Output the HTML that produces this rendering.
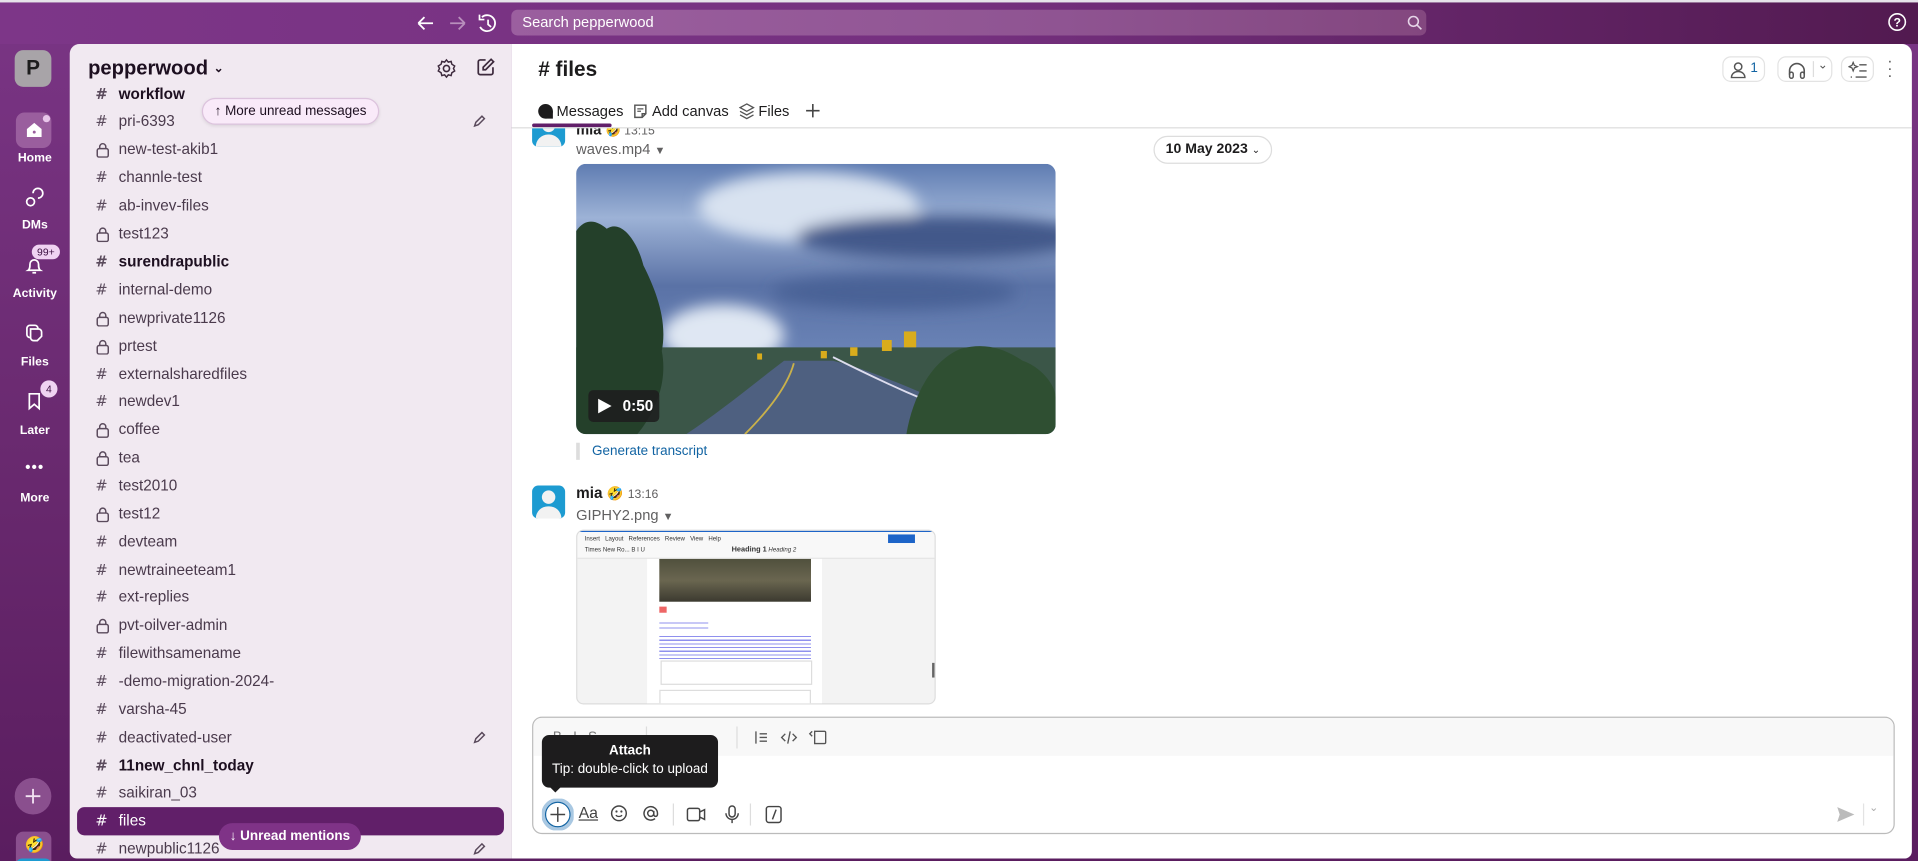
<!DOCTYPE html>
<html><head><meta charset="utf-8">
<style>
*{box-sizing:border-box;margin:0;padding:0}
html,body{width:1918px;height:861px;overflow:hidden;background:#5a1e5c}
body{font-family:"Liberation Sans","Noto Sans CJK JP",sans-serif}
#w{position:absolute;left:0;top:0;width:1568px;height:704px;transform:scale(1.22321,1.22301);transform-origin:0 0;background:linear-gradient(180deg,#7a3585 0%,#6a2a70 50%,#5a1d5f 100%);overflow:hidden}
.abs{position:absolute}
.top{left:0;top:0;width:1568px;height:36px;background:linear-gradient(90deg,#7d3688 0%,#75307f 50%,#521a50 100%)}
.strip{left:0;top:0;width:1568px;height:2px;background:#e6e3ea}
.search{left:418px;top:8px;width:748px;height:21px;border-radius:5px;background:linear-gradient(90deg,#9b5f9f,#8f5492 60%,#83477f);color:#fff;font-size:12px;line-height:21px;padding-left:9px}
.rail .lbl{position:absolute;width:57px;text-align:center;color:#fff;font-size:10px;font-weight:bold}
.side{left:57px;top:36px;width:361px;height:666px;background:#f1e9f1;border-top-left-radius:8px;border-bottom-left-radius:6px}
.ch{position:absolute;left:21px;font-size:12.5px;color:#4a3a4c;height:20px;line-height:20px}
.ch .ic{position:absolute;left:0;top:0;width:14px;color:#5a4a5c;font-family:"DejaVu Sans",sans-serif;font-size:12px}
.ch .ic svg{margin-top:4px}
.ch span.t{position:absolute;left:19px;white-space:nowrap}
.ch.b{color:#1d0f20;font-weight:bold}
.main{left:418px;top:36px;width:1145px;height:666px;background:#fff;border-top-right-radius:8px;border-bottom-right-radius:6px}
.hb{position:absolute;border:1px solid #e3e3e3;border-radius:7px;height:21px}
svg{display:block}
</style></head><body>
<svg width="0" height="0" style="position:absolute"><defs><g id="lk"><rect x="1.5" y="5.5" width="9" height="7" rx="1.5" stroke="#5a4a5c" stroke-width="1.2" fill="none"/><path d="M3.5 5.5V4a2.5 2.5 0 0 1 5 0v1.5" stroke="#5a4a5c" stroke-width="1.2" fill="none"/></g></defs></svg>
<div id="w">
<div class="abs top"></div>
<div class="abs strip"></div>
<svg class="abs" style="left:340px;top:10px" width="80" height="18" viewBox="0 0 80 18">
<path d="M2 9h12M2 9l5-5M2 9l5 5" stroke="#fff" stroke-width="1.5" fill="none"/>
<path d="M40 9h-12M40 9l-5-5M40 9l-5 5" stroke="#b98fbd" stroke-width="1.5" fill="none"/>
<path d="M54 4a6.5 6.5 0 1 1 -1.5 8" stroke="#fff" stroke-width="1.5" fill="none"/><path d="M52 2v4h4" stroke="#fff" stroke-width="1.4" fill="none"/><path d="M59 6v4l2.5 2" stroke="#fff" stroke-width="1.4" fill="none"/>
</svg>
<div class="abs search">Search pepperwood</div>
<svg class="abs" style="left:1150px;top:12px" width="13" height="13"><circle cx="5.5" cy="5.5" r="4" stroke="#e6d5e8" stroke-width="1.3" fill="none"/><path d="M8.5 8.5l3.5 3.5" stroke="#e6d5e8" stroke-width="1.3"/></svg>
<svg class="abs" style="left:1543px;top:10px" width="16" height="16"><circle cx="8" cy="8" r="6.7" stroke="#fff" stroke-width="1.3" fill="none"/><text x="8" y="11.5" text-anchor="middle" font-size="10" font-weight="bold" fill="#fff" font-family="Liberation Sans">?</text></svg>

<div class="rail">
<div class="abs" style="left:12px;top:41px;width:30px;height:30px;border-radius:7px;background:#a8a4a8;color:#1d1d1d;font-size:17px;font-weight:bold;text-align:center;line-height:30px">P</div>
<div class="abs" style="left:13px;top:92px;width:29px;height:29px;border-radius:7px;background:#9a5e9e"></div>
<svg class="abs" style="left:19px;top:97px" width="18" height="18"><path d="M3 8.5L9 3.5l6 5V15H3z" fill="#fff"/><circle cx="9" cy="11" r="1.2" fill="#9a5e9e"/></svg>
<div class="abs" style="left:35px;top:94px;width:6px;height:6px;border-radius:3px;background:#e8c6ea"></div>
<div class="lbl" style="top:124px">Home</div>
<svg class="abs" style="left:19px;top:153px" width="18" height="18"><path d="M8 5a4 4 0 1 1 4 4" stroke="#fff" stroke-width="1.4" fill="none"/><circle cx="6" cy="12" r="3.2" stroke="#fff" stroke-width="1.4" fill="none"/></svg>
<div class="lbl" style="top:179px">DMs</div>
<svg class="abs" style="left:19px;top:208px" width="18" height="18"><path d="M4 13c1.5-1 1.5-3 1.5-5a3.5 3.5 0 0 1 7 0c0 2 0 4 1.5 5z M7.5 15h3" stroke="#fff" stroke-width="1.4" fill="none"/></svg>
<div class="abs" style="left:26px;top:200px;width:23px;height:12px;border-radius:6px;background:#f0d3f2;color:#3b1040;font-size:8.5px;text-align:center;line-height:12px">99+</div>
<div class="lbl" style="top:235px">Activity</div>
<svg class="abs" style="left:19px;top:263px" width="18" height="18"><rect x="3" y="3" width="9" height="10" rx="2.5" stroke="#fff" stroke-width="1.4" fill="none"/><path d="M6 6h6.5a2.5 2.5 0 0 1 2.5 2.5V12l-3.5 3.5H8.5A2.5 2.5 0 0 1 6 13z" stroke="#fff" stroke-width="1.4" fill="#6a2a70"/></svg>
<div class="lbl" style="top:291px">Files</div>
<svg class="abs" style="left:19px;top:319px" width="18" height="18"><path d="M5 3h8v12l-4-3.5L5 15z" stroke="#fff" stroke-width="1.4" fill="none"/></svg>
<div class="abs" style="left:33px;top:311px;width:14px;height:14px;border-radius:7px;background:#f0d3f2;color:#3b1040;font-size:8.5px;text-align:center;line-height:14px">4</div>
<div class="lbl" style="top:347px">Later</div>
<div class="lbl" style="top:375px;font-size:12px;letter-spacing:1px">•••</div>
<div class="lbl" style="top:402px">More</div>
<div class="abs" style="left:12px;top:636px;width:30px;height:30px;border-radius:15px;background:#8a4f8e"></div>
<svg class="abs" style="left:19px;top:643px" width="16" height="16"><path d="M8 2v12M2 8h12" stroke="#f2e3f2" stroke-width="1.5"/></svg>
<div class="abs" style="left:13px;top:680px;width:29px;height:30px;border-radius:6px;background:#8a4f8e;overflow:hidden"><div style="position:absolute;left:0;top:22px;width:29px;height:10px;background:#1d9bd1;border-radius:5px 5px 0 0"></div><div style="position:absolute;left:7px;top:3px;font-size:13px">🤣</div></div>
</div>

<div class="abs side">
<div class="abs" style="left:15px;top:11px;font-size:16.5px;font-weight:bold;color:#1d0f20">pepperwood <span style="font-size:10px;position:relative;top:-2px">⌄</span></div>
<svg class="abs" style="left:299px;top:11px" width="18" height="18" viewBox="0 0 18 18"><circle cx="9" cy="9" r="2.5" stroke="#3d2a3d" stroke-width="1.3" fill="none"/><path d="M9 2l1.5 1.8 2.3-.6.6 2.3L15.7 7l-1 2 1 2-2.3 1.5-.6 2.3-2.3-.6L9 16l-1.5-1.8-2.3.6-.6-2.3L2.3 11l1-2-1-2 2.3-1.5.6-2.3 2.3.6z" stroke="#3d2a3d" stroke-width="1.2" fill="none"/></svg>
<svg class="abs" style="left:331px;top:10px" width="18" height="18"><path d="M9 3H4.5A1.5 1.5 0 0 0 3 4.5v9A1.5 1.5 0 0 0 4.5 15h9a1.5 1.5 0 0 0 1.5-1.5V9" stroke="#3d2a3d" stroke-width="1.4" fill="none"/><path d="M13.5 2.5l2 2L9 11H7V9z" stroke="#3d2a3d" stroke-width="1.4" fill="none"/></svg>
</div>
<div class="abs" style="left:57px;top:66px;width:361px;height:636px;overflow:hidden">
<div class="ch b" style="top:1px"><span class="ic">#</span><span class="t">workflow</span></div>
<div class="ch" style="top:23px"><span class="ic">#</span><span class="t">pri-6393</span></div>
<div class="ch" style="top:46px"><span class="ic"><svg width="12" height="13"><use href="#lk"/></svg></span><span class="t">new-test-akib1</span></div>
<div class="ch" style="top:69px"><span class="ic">#</span><span class="t">channle-test</span></div>
<div class="ch" style="top:92px"><span class="ic">#</span><span class="t">ab-invev-files</span></div>
<div class="ch" style="top:115px"><span class="ic"><svg width="12" height="13"><use href="#lk"/></svg></span><span class="t">test123</span></div>
<div class="ch b" style="top:138px"><span class="ic">#</span><span class="t">surendrapublic</span></div>
<div class="ch" style="top:161px"><span class="ic">#</span><span class="t">internal-demo</span></div>
<div class="ch" style="top:184px"><span class="ic"><svg width="12" height="13"><use href="#lk"/></svg></span><span class="t">newprivate1126</span></div>
<div class="ch" style="top:207px"><span class="ic"><svg width="12" height="13"><use href="#lk"/></svg></span><span class="t">prtest</span></div>
<div class="ch" style="top:230px"><span class="ic">#</span><span class="t">externalsharedfiles</span></div>
<div class="ch" style="top:252px"><span class="ic">#</span><span class="t">newdev1</span></div>
<div class="ch" style="top:275px"><span class="ic"><svg width="12" height="13"><use href="#lk"/></svg></span><span class="t">coffee</span></div>
<div class="ch" style="top:298px"><span class="ic"><svg width="12" height="13"><use href="#lk"/></svg></span><span class="t">tea</span></div>
<div class="ch" style="top:321px"><span class="ic">#</span><span class="t">test2010</span></div>
<div class="ch" style="top:344px"><span class="ic"><svg width="12" height="13"><use href="#lk"/></svg></span><span class="t">test12</span></div>
<div class="ch" style="top:367px"><span class="ic">#</span><span class="t">devteam</span></div>
<div class="ch" style="top:390px"><span class="ic">#</span><span class="t">newtraineeteam1</span></div>
<div class="ch" style="top:412px"><span class="ic">#</span><span class="t">ext-replies</span></div>
<div class="ch" style="top:435px"><span class="ic"><svg width="12" height="13"><use href="#lk"/></svg></span><span class="t">pvt-oilver-admin</span></div>
<div class="ch" style="top:458px"><span class="ic">#</span><span class="t">filewithsamename</span></div>
<div class="ch" style="top:481px"><span class="ic">#</span><span class="t">-demo-migration-2024-</span></div>
<div class="ch" style="top:504px"><span class="ic">#</span><span class="t">varsha-45</span></div>
<div class="ch" style="top:527px"><span class="ic">#</span><span class="t">deactivated-user</span></div>
<div class="ch b" style="top:550px"><span class="ic">#</span><span class="t">11new_chnl_today</span></div>
<div class="ch" style="top:572px"><span class="ic">#</span><span class="t">saikiran_03</span></div>
<div style="position:absolute;left:6px;top:594px;width:349px;height:23px;border-radius:6px;background:#611f69"></div>
<div class="ch" style="top:595px;color:#fff"><span class="ic" style="color:#fff">#</span><span class="t">files</span></div>
<div class="ch" style="top:618px"><span class="ic">#</span><span class="t">newpublic1126</span></div>
</div>
<svg class="abs" style="left:386px;top:93px" width="12" height="12"><path d="M2 10l1-3 5-5 2 2-5 5z" stroke="#5a4a5c" stroke-width="1.2" fill="none"/></svg>
<svg class="abs" style="left:386px;top:597px" width="12" height="12"><path d="M2 10l1-3 5-5 2 2-5 5z" stroke="#5a4a5c" stroke-width="1.2" fill="none"/></svg>
<svg class="abs" style="left:386px;top:688px" width="12" height="12"><path d="M2 10l1-3 5-5 2 2-5 5z" stroke="#5a4a5c" stroke-width="1.2" fill="none"/></svg>
<div class="abs" style="left:165px;top:80px;width:145px;height:22px;border-radius:11px;background:#f9eaf9;border:1px solid #dcc3dd;font-size:11px;color:#1d0f20;line-height:20px;text-align:center;box-shadow:0 1px 3px rgba(0,0,0,.1)">↑ More unread messages</div>
<div class="abs" style="left:179px;top:673px;width:116px;height:22px;border-radius:11px;background:#7f3387;font-size:11px;color:#fff;font-weight:bold;line-height:22px;text-align:center">↓ Unread mentions</div>

<div class="abs main">
<div class="abs" style="left:22px;top:11px;font-size:17px;font-weight:bold;color:#1d1c1d"># files</div>
<div class="hb" style="left:990px;top:10px;width:35px"><svg style="position:absolute;left:5px;top:3px" width="14" height="14"><circle cx="7" cy="4.5" r="3" stroke="#555" stroke-width="1.2" fill="none"/><path d="M1.5 13.5c0-3 2.5-5 5.5-5s5.5 2 5.5 5z" stroke="#555" stroke-width="1.2" fill="none"/></svg><span style="position:absolute;left:22px;top:3px;font-size:11px;color:#1264a3">1</span></div>
<div class="hb" style="left:1035px;top:10px;width:45px"><svg style="position:absolute;left:7px;top:3px" width="16" height="15"><path d="M2 11V8a6 6 0 0 1 12 0v3" stroke="#555" stroke-width="1.3" fill="none"/><rect x="2" y="9" width="3" height="5" rx="1.5" stroke="#555" stroke-width="1.2" fill="none"/><rect x="11" y="9" width="3" height="5" rx="1.5" stroke="#555" stroke-width="1.2" fill="none"/></svg><div style="position:absolute;left:28px;top:3px;width:1px;height:13px;background:#ddd"></div><span style="position:absolute;left:32px;top:1px;font-size:10px;color:#555">⌄</span></div>
<div class="hb" style="left:1087px;top:10px;width:27px"><svg style="position:absolute;left:5px;top:3px" width="16" height="15"><path d="M4 1l1 2.5 2.5 1-2.5 1L4 8 3 5.5.5 4.5 3 3.5z" stroke="#555" stroke-width="1" fill="none"/><path d="M9 3h6M9 8h6M6 13h9M2 13h1" stroke="#555" stroke-width="1.2"/></svg></div>
<div class="abs" style="left:1124px;top:11px;font-size:13px;color:#555;line-height:6px;width:6px;text-align:center">·<br>·<br>·</div>
<svg class="abs" style="left:21px;top:48px" width="14" height="14"><circle cx="7" cy="7" r="6" fill="#1d1c1d"/><path d="M7 7h6v6H7z" fill="#1d1c1d"/></svg>
<div class="abs" style="left:37px;top:48px;font-size:12px;color:#1d1c1d">Messages</div>
<div class="abs" style="left:17px;top:65px;width:65px;height:3px;background:#611f69;border-radius:2px"></div>
<svg class="abs" style="left:99px;top:48px" width="13" height="14"><path d="M2 2h9v7l-3 3H2z M8 12V9h3" stroke="#555" stroke-width="1.2" fill="none"/><path d="M4 5h5M4 7h3" stroke="#555" stroke-width="1"/></svg>
<div class="abs" style="left:115px;top:48px;font-size:12px;color:#1d1c1d">Add canvas</div>
<svg class="abs" style="left:186px;top:48px" width="13" height="14"><path d="M6.5 1l5.5 3-5.5 3L1 4z M1 7l5.5 3 5.5-3 M1 10l5.5 3 5.5-3" stroke="#555" stroke-width="1.1" fill="none"/></svg>
<div class="abs" style="left:202px;top:48px;font-size:12px;color:#1d1c1d">Files</div>
<svg class="abs" style="left:240px;top:48px" width="13" height="13"><path d="M6.5 1v11M1 6.5h11" stroke="#444" stroke-width="1.3"/></svg>
<div class="abs" style="left:0;top:68px;width:1145px;height:1px;background:#ddd"></div>
<div class="abs" style="left:0;top:69px;width:1145px;height:480px;overflow:hidden">
 <div class="abs" style="left:17px;top:-12px;width:27px;height:27px;border-radius:5px;background:#1d9bd1;overflow:hidden"><div style="position:absolute;left:8px;top:4px;width:11px;height:11px;border-radius:6px;background:#f2f2f2"></div><div style="position:absolute;left:3px;top:17px;width:21px;height:14px;border-radius:10px 10px 0 0;background:#f2f2f2"></div></div>
 <div class="abs" style="left:53px;top:-6px;font-size:12px;font-weight:bold;color:#1d1c1d">mia <span style="font-weight:normal;color:#616061;font-size:10px">🤣 13:15</span></div>
 <div class="abs" style="left:53px;top:10px;font-size:12px;color:#616061">waves.mp4 <span style="font-size:9px">▼</span></div>
 <div class="abs" style="left:525px;top:6px;width:97px;height:23px;border:1px solid #ddd;border-radius:12px;font-size:11.5px;font-weight:bold;color:#1d1c1d;text-align:center;line-height:21px;background:#fff">10 May 2023 <span style="font-size:8px;font-weight:normal">⌄</span></div>
 <svg class="abs" style="left:53px;top:29px" width="392" height="221" viewBox="0 0 392 221">
  <defs><clipPath id="c"><rect width="392" height="221" rx="8"/></clipPath>
  <linearGradient id="s" x1="0" y1="0" x2="0" y2="1"><stop offset="0" stop-color="#5f7cb2"/><stop offset=".2" stop-color="#9db2d6"/><stop offset=".45" stop-color="#5a72a6"/><stop offset=".7" stop-color="#6a83b6"/></linearGradient>
  <filter id="bl"><feGaussianBlur stdDeviation="6"/></filter></defs>
  <g clip-path="url(#c)">
  <rect width="392" height="221" fill="url(#s)"/>
  <g filter="url(#bl)"><ellipse cx="190" cy="35" rx="90" ry="28" fill="#d8e2f0"/><ellipse cx="300" cy="60" rx="120" ry="18" fill="#43598a"/><ellipse cx="260" cy="105" rx="100" ry="14" fill="#4a6296"/><ellipse cx="120" cy="140" rx="50" ry="25" fill="#dfe7f3"/></g>
  <path d="M0 150h392v71H0z" fill="#3b5648"/>
  <path d="M90 221c30-20 60-45 80-60h40c40 10 80 30 150 60z" fill="#4e6080"/>
  <path d="M138 221c20-20 35-40 40-58" stroke="#c9b14a" stroke-width="1.5" fill="none"/>
  <path d="M210 158c30 15 80 40 150 63" stroke="#dde" stroke-width="1.5" fill="none"/>
  <path d="M0 55c8-12 18-8 25-2 12-8 25 10 30 30 10 20 20 45 15 70 5 25-5 50-20 68H0z" fill="#24402a"/>
  <path d="M270 221c5-30 20-60 45-70 20-5 35 0 50 10 15 5 27 20 27 30v30z" fill="#2f4f32"/>
  <g fill="#d9ac1c"><rect x="268" y="137" width="10" height="13"/><rect x="250" y="144" width="8" height="9"/><rect x="224" y="150" width="6" height="7"/><rect x="200" y="153" width="5" height="6"/><rect x="148" y="155" width="4" height="5"/></g>
  </g>
 </svg>
 <div class="abs" style="left:63px;top:214px;width:58px;height:26px;border-radius:4px;background:rgba(29,28,29,.85);color:#fff;font-size:12.5px;font-weight:bold;line-height:26px;padding-left:28px">0:50</div>
 <svg class="abs" style="left:69px;top:220px" width="14" height="14"><path d="M2 1l11 6-11 6z" fill="#fff"/></svg>
 <div class="abs" style="left:53px;top:257px;width:3px;height:14px;background:#ddd"></div>
 <div class="abs" style="left:66px;top:258px;font-size:11px;color:#1264a3">Generate transcript</div>
 <div class="abs" style="left:17px;top:292px;width:27px;height:27px;border-radius:5px;background:#1d9bd1;overflow:hidden"><div style="position:absolute;left:8px;top:4px;width:11px;height:11px;border-radius:6px;background:#f2f2f2"></div><div style="position:absolute;left:3px;top:17px;width:21px;height:14px;border-radius:10px 10px 0 0;background:#f2f2f2"></div></div>
 <div class="abs" style="left:53px;top:291px;font-size:12.5px;font-weight:bold;color:#1d1c1d">mia <span style="font-weight:normal;font-size:11px">🤣</span> <span style="font-weight:normal;color:#616061;font-size:10px">13:16</span></div>
 <div class="abs" style="left:53px;top:309px;font-size:12px;color:#616061">GIPHY2.png <span style="font-size:9px">▼</span></div>
 <div class="abs" style="left:53px;top:328px;width:294px;height:143px;border:1px solid #ddd;border-radius:6px;overflow:hidden;background:#f3f3f3">
  <div style="position:absolute;left:0;top:0;width:294px;height:1px;background:#1d64c8"></div>
  <div style="position:absolute;left:0;top:1px;width:294px;height:22px;background:#f8f8f8;border-bottom:1px solid #e5e5e5;font-size:5px;color:#333;padding:2px 6px;line-height:9px">Insert &nbsp; Layout &nbsp; References &nbsp; Review &nbsp; View &nbsp; Help<br>Times New Ro... B I U &nbsp; &nbsp; &nbsp; &nbsp; &nbsp; &nbsp; &nbsp; &nbsp; &nbsp; &nbsp; &nbsp; &nbsp; &nbsp; &nbsp; &nbsp; &nbsp; &nbsp; &nbsp; &nbsp; &nbsp; &nbsp; &nbsp; &nbsp; &nbsp; &nbsp; <b style="font-size:6px">Heading 1</b> <i>Heading 2</i></div>
  <div style="position:absolute;left:254px;top:3px;width:22px;height:7px;background:#1d64c8"></div>
  <div style="position:absolute;left:57px;top:23px;width:143px;height:120px;background:#fff"></div>
  <div style="position:absolute;left:67px;top:23px;width:124px;height:35px;background:linear-gradient(180deg,#50503d,#6a6650 50%,#3c3a30)"></div>
  <div style="position:absolute;left:67px;top:62px;width:6px;height:5px;background:#e66"></div>
  <div style="position:absolute;left:67px;top:75px;width:40px;height:8px;background:repeating-linear-gradient(180deg,#8f90ee 0 1px,transparent 1px 4px)"></div>
  <div style="position:absolute;left:67px;top:86px;width:124px;height:20px;background:repeating-linear-gradient(180deg,#8f90ee 0 1px,transparent 1px 3px)"></div>
  <div style="position:absolute;left:68px;top:106px;width:124px;height:20px;background:#fff;border:1px solid #ddd"></div>
  <div style="position:absolute;left:67px;top:130px;width:124px;height:13px;background:#fff;border:1px solid #ddd"></div>
  <div style="position:absolute;left:290px;top:108px;width:2px;height:12px;background:#666"></div>
 </div>
</div>
<div class="abs" style="left:17px;top:550px;width:1114px;height:96px;border:1px solid #bbb;border-radius:8px;background:#fff;overflow:hidden">
 <div style="position:absolute;left:0;top:0;width:1114px;height:31px;background:#f8f8f8"></div>
 <div style="position:absolute;left:16px;top:10px;width:150px;font-size:11px;color:#777">B &nbsp; I &nbsp; S</div>
 <div style="position:absolute;left:92px;top:7px;width:1px;height:18px;background:#ddd"></div>
 <div style="position:absolute;left:166px;top:7px;width:1px;height:18px;background:#ddd"></div>
 <svg style="position:absolute;left:180px;top:9px" width="80" height="14"><path d="M2 2v10M5 4h6M5 7h6M5 10h6" stroke="#555" stroke-width="1.1"/><path d="M26 4l-3 3 3 3M32 4l3 3-3 3M30 2l-2 10" stroke="#555" stroke-width="1.1" fill="none"/><path d="M50 2h8a1 1 0 0 1 1 1v8a1 1 0 0 1-1 1h-8z M48 2l-2 2 2 2" stroke="#555" stroke-width="1.1" fill="none"/></svg>
 <svg style="position:absolute;left:7px;top:66px" width="26" height="26"><circle cx="13" cy="13" r="12" fill="none" stroke="#a9c8e2" stroke-width="3"/><circle cx="13" cy="13" r="10" fill="#fff" stroke="#1264a3" stroke-width="1"/><path d="M13 7v12M7 13h12" stroke="#444" stroke-width="1.2"/></svg>
 <div style="position:absolute;left:37px;top:70px;font-size:13px;color:#444;text-decoration:underline">Aa</div>
 <svg style="position:absolute;left:63px;top:71px" width="100" height="16"><circle cx="7" cy="7" r="6" stroke="#444" stroke-width="1.2" fill="none"/><circle cx="5" cy="5.5" r=".9" fill="#444"/><circle cx="9" cy="5.5" r=".9" fill="#444"/><path d="M4.5 8.5a3 2.5 0 0 0 5 0" stroke="#444" stroke-width="1.1" fill="none"/><circle cx="33" cy="7" r="2.5" stroke="#444" stroke-width="1.2" fill="none"/><path d="M35.5 5v3a1.5 1.5 0 0 0 3 0V7a5.5 5.5 0 1 0-2 4.3" stroke="#444" stroke-width="1.2" fill="none"/></svg>
 <div style="position:absolute;left:114px;top:70px;width:1px;height:18px;background:#ddd"></div>
 <svg style="position:absolute;left:125px;top:71px" width="90" height="16"><rect x="1" y="3" width="10" height="10" rx="1.5" stroke="#444" stroke-width="1.2" fill="none"/><path d="M11 6l4-2v8l-4-2" stroke="#444" stroke-width="1.2" fill="none"/><rect x="35" y="1" width="5" height="9" rx="2.5" stroke="#444" stroke-width="1.2" fill="none"/><path d="M32.5 7a5 5 0 0 0 10 0M37.5 12v3" stroke="#444" stroke-width="1.2" fill="none"/></svg>
 <div style="position:absolute;left:177px;top:70px;width:1px;height:18px;background:#ddd"></div>
 <svg style="position:absolute;left:189px;top:71px" width="16" height="16"><rect x="1.5" y="1.5" width="12" height="13" rx="2" stroke="#444" stroke-width="1.2" fill="none"/><path d="M9.5 4l-3 8" stroke="#444" stroke-width="1.2"/></svg>
 <svg style="position:absolute;left:1065px;top:72px" width="16" height="14"><path d="M1 1l14 6-14 6 2-6z" fill="#bbb"/></svg>
 <div style="position:absolute;left:1087px;top:70px;width:1px;height:18px;background:#e3e3e3"></div>
 <div style="position:absolute;left:1092px;top:68px;font-size:9px;color:#aaa">⌄</div>
</div>
<div class="abs" style="left:25px;top:565px;width:144px;height:43px;background:#1d1c1d;border-radius:6px;color:#fff;text-align:center;font-size:11px;line-height:15px;padding-top:6px"><b>Attach</b><br>Tip: double-click to upload</div>
<div class="abs" style="left:31px;top:607px;width:0;height:0;border-left:5px solid transparent;border-right:5px solid transparent;border-top:5px solid #1d1c1d"></div>
</div>
</div>
</body></html>
